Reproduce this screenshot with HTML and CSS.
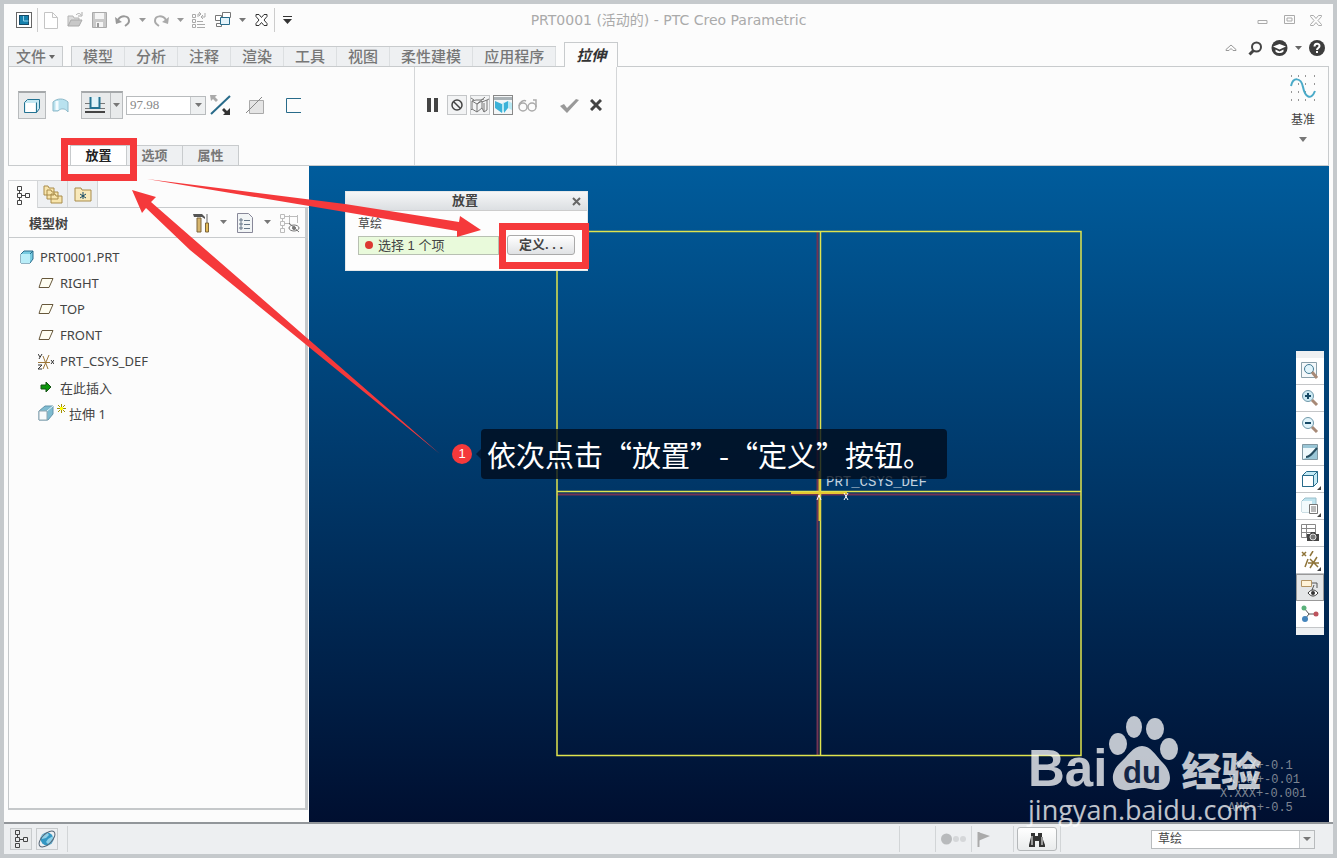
FILE: index.html
```html
<!DOCTYPE html>
<html lang="zh-CN">
<head>
    <meta charset="UTF-8">
    <meta name="viewport" content="width=device-width, initial-scale=1.0">
    <title>PRT0001 - PTC Creo Parametric</title>
    <link rel="stylesheet" href="styles.css">
</head>
<body>
<div class="app">

  <header class="titlebar">
    <div class="quick">
      <button class="ico" aria-label="Creo"><svg width="16" height="16"><rect x=".5" y=".5" width="15" height="15" fill="#fff" stroke="#666"/><rect x="3.500" y="3.500" width="9" height="9" fill="#1681ad" stroke="#164a66"/><path d="M7.500 4v5h5" fill="none" stroke="#8fd0e8"/></svg></button>
      <span class="sep"></span>
      <button class="ico" aria-label="新建"><svg width="14" height="17"><path d="M.5.5h8l5 5v11H.5zM8.500.5v5h5" fill="#fff" stroke="#c4c4c4"/></svg></button>
      <button class="ico" aria-label="打开"><svg width="17" height="16"><path d="M1 14V4h5l1 2h5v2" fill="#ddd" stroke="#b5b5b5"/><path d="M1 14l3-6h11l-3 6z" fill="#c8c8c8" stroke="#aaa"/><path d="M9 3c2-2 4-2 5 0m1-3v4h-4" fill="none" stroke="#aaa"/></svg></button>
      <button class="ico" aria-label="保存"><svg width="15" height="16"><path d="M.5.500h14v15H.5z" fill="#c9c9c9" stroke="#aaa"/><path d="M3 1h9v6H3zM4 10h7v5H4z" fill="#f5f5f5"/><path d="M5 11h2v4H5z" fill="#999"/></svg></button>
      <button class="ico" aria-label="撤消"><svg width="16" height="14"><path d="M3 7c3-5 11-5 11 1 0 2-1 3-4 5" fill="none" stroke="#999" stroke-width="2"/><path d="M0 4l1 7 6-2z" fill="#999"/></svg></button>
      <button class="ico drop" aria-label="更多"><svg width="7" height="5"><path d="M0 0h7L3.500 4z" fill="#999"/></svg></button>
      <button class="ico" aria-label="重做"><svg width="16" height="14"><path d="M13 7C10 2 2 2 2 8c0 2 1 3 4 5" fill="none" stroke="#aaa" stroke-width="2"/><path d="M16 4l-1 7-6-2z" fill="#aaa"/></svg></button>
      <button class="ico drop" aria-label="更多"><svg width="7" height="5"><path d="M0 0h7L3.500 4z" fill="#999"/></svg></button>
      <button class="ico" aria-label="重新生成"><svg width="16" height="16" fill="none" stroke="#aaa"><path d="M1.500 2.500h3v3h-3zM1.500 7.500h3v3h-3zM1.500 12.500h3v3h-3zM6 9.500h6M6 12.500h8M6 15.500h8M7 5V2h3m4-1v4h-4M8 0l2 2-2 2M12 3l-2 2 2 2"/></svg></button>
      <button class="ico" aria-label="窗口"><svg width="16" height="16" stroke="#777"><path d="M.5 3.500h6v5h-6zM1.500 11.500h5v3h-5zM7.500.5h8v5h-8z" fill="#fff"/><path d="M5.500 5.500h9v7h-9z" fill="#e4f3fa" stroke="#286b8a"/></svg></button>
      <button class="ico drop" aria-label="更多"><svg width="7" height="5"><path d="M0 0h7L3.500 4z" fill="#777"/></svg></button>
      <button class="ico" aria-label="关闭"><svg width="13" height="12"><path d="M1 .5h3l2.500 3 2.500-3h3v2L9 6l3 3.500v2H9l-2.500-3-2.500 3H1v-2L4 6 1 2.500z" fill="#fff" stroke="#333"/></svg></button>
      <span class="sep"></span>
      <button class="ico drop" aria-label="自定义"><svg width="9" height="8"><path d="M0 .5h9" stroke="#333"/><path d="M0 3h9L4.500 8z" fill="#333"/></svg></button>
    </div>
    <h1 class="window-title">PRT0001 (活动的) - PTC Creo Parametric</h1>
    <div class="window-buttons">
      <button class="ico" aria-label="最小化"><svg width="11" height="10"><path d="M1 5.500h9v3H1z" fill="none" stroke="#aaa"/></svg></button>
      <button class="ico" aria-label="最大化"><svg width="11" height="10"><path d="M.5.5h10v8H.5zM3 3h5v3H3z" fill="none" stroke="#aaa"/></svg></button>
      <button class="ico" aria-label="关闭窗口"><svg width="12" height="11"><path d="M.5.5h3L6 3.500l2.500-3h3v1L8 5.500l3.500 4v1h-3L6 7.500l-2.500 3h-3v-1L4 5.500l-3.500-4z" fill="none" stroke="#aaa"/></svg></button>
    </div>
  </header>

  <nav class="tabs">
    <button class="tab file">文件<svg width="6" height="4"><path d="M0 0h6L3 4z" fill="#666"/></svg></button>
    <div class="tab-group">
      <button class="tab">模型</button>
      <button class="tab">分析</button>
      <button class="tab">注释</button>
      <button class="tab">渲染</button>
      <button class="tab">工具</button>
      <button class="tab">视图</button>
      <button class="tab">柔性建模</button>
      <button class="tab">应用程序</button>
    </div>
    <button class="tab current">拉伸</button>
    <div class="help">
      <button class="ico" aria-label="最小化功能区"><svg width="12" height="8"><path d="M1 5.500L6 1l5 4.500v1H8L6 4.500l-2 2H1z" fill="none" stroke="#999"/></svg></button>
      <button class="ico" aria-label="搜索"><svg width="15" height="15"><circle cx="8.500" cy="6" r="4.500" fill="none" stroke="#444" stroke-width="2"/><path d="M5.500 9.500L1.500 13.500" stroke="#444" stroke-width="3"/></svg></button>
      <button class="ico" aria-label="学习"><svg width="17" height="16"><circle cx="8.500" cy="8" r="8" fill="#3d3d3d"/><path d="M2 6.500L8.500 4 15 6.500 8.500 9.500zM4.500 9.500v2c2 2 6 2 8 0v-2l-4 2z" fill="#fff"/></svg></button>
      <button class="ico drop" aria-label="更多"><svg width="7" height="5"><path d="M0 0h7L3.500 4z" fill="#666"/></svg></button>
      <button class="ico" aria-label="帮助"><svg width="16" height="16"><circle cx="8" cy="8" r="8" fill="#3d3d3d"/><path d="M5.500 6.500C5.500 3 10.500 3 10.500 6c0 2-2.500 2-2.500 4" fill="none" stroke="#fff" stroke-width="2"/><path d="M7 11h2v2H7z" fill="#fff"/></svg></button>
    </div>
  </nav>

  <section class="ribbon">
    <div class="ribbon-left">
      <div class="tools">
        <button class="tool pressed" aria-label="实体"><svg width="16" height="16"><path d="M.5 4.500l3-3h12v9l-3 4H.5z" fill="#c4e8f3" stroke="#247392"/><path d="M1.500 5h10v9h-10z" fill="#fff"/><path d="M12.500 4.500v10" stroke="#247392"/></svg></button>
        <button class="tool" aria-label="曲面"><svg width="17" height="15"><path d="M1 4c4-4 11-4 15 0v10c-3-4-7-4-10-1H1z" fill="#b9e2ef" stroke="#8db9c9"/><path d="M5 3v9" stroke="#f5fcff" stroke-width="3"/></svg></button>
        <button class="tool pressed depth" aria-label="深度"><svg width="20" height="17"><path d="M0 6.500h5M15 6.500h5M0 11.500h20" stroke="#777"/><path d="M0 15h20" stroke="#444" stroke-width="2"/><path d="M5.500 0v11h9V0" fill="#e1f3f9" stroke="#247392" stroke-width="2"/></svg><span class="split"><svg width="7" height="5"><path d="M0 0h7L3.500 4z" fill="#777"/></svg></span></button>
        <div class="combo value">
          <input type="text" value="97.98" aria-label="深度值">
          <button aria-label="选择深度值"><svg width="7" height="5"><path d="M0 0h7L3.500 4z" fill="#777"/></svg></button>
        </div>
        <button class="tool" aria-label="反向"><svg width="22" height="22"><path d="M1 20L20 2" stroke="#286b8a" stroke-width="2"/><path d="M0 1h7L5 3l3 3-2 2-3-3-2 2z" fill="#aaa"/><path d="M20 21h-7l2-2-3-3 2-2 3 3 3-3z" fill="#333"/></svg></button>
        <button class="tool wide" aria-label="移除材料"><svg width="19" height="19"><path d="M3.500 4.500h14v13h-14z" fill="#e5e5e5" stroke="#aaa"/><path d="M0 17L16 1" stroke="#888"/></svg></button>
        <button class="tool wide" aria-label="加厚草绘"><svg width="16" height="17"><path d="M16 1.500H1.500v14H16" fill="none" stroke="#286b8a"/></svg></button>
      </div>
      <div class="subtabs">
        <button class="subtab on">放置</button>
        <button class="subtab">选项</button>
        <button class="subtab">属性</button>
      </div>
    </div>
    <div class="ribbon-mid">
      <button class="ico" aria-label="暂停"><svg width="12" height="14"><path d="M1 0h4v14H1zM8 0h4v14H8z" fill="#444"/></svg></button>
      <button class="mini" aria-label="无预览"><svg width="14" height="14"><circle cx="7" cy="7" r="5" fill="none" stroke="#444" stroke-width="1.500"/><path d="M3.500 3.500l7 7" stroke="#444" stroke-width="1.500"/></svg></button>
      <button class="mini" aria-label="分离预览"><svg width="18" height="16" fill="none" stroke="#777"><path d="M1 4l4-1h5l3-1M1 4v8l5 3 5-4V4L6 7 1 4m5 3v8M11 5l5-2v10l-3 2-2-4M0 1l3 2M13 6v9M6 7l8-7M16 3l2-1M1 12l-1 1"/></svg></button>
      <button class="mini on" aria-label="附加预览"><svg width="18" height="16"><path d="M0 0h18v3H0z" fill="#aab2b6"/><path d="M1 4l7 3v9L1 11zM10 6l4-2v7l-4 5z" fill="#3cb2d8"/><path d="M8 7l2-2v9l-2 2zM14 4l4 2v7l-4-2z" fill="#b6e8f3"/></svg></button>
      <button class="ico glasses" aria-label="特征预览"><svg width="20" height="14" fill="none" stroke="#aaa" stroke-width="1.500"><circle cx="5" cy="9" r="4"/><circle cx="14" cy="9" r="4"/><path d="M1 8c1-5 5-6 7-5M18 9V2h-3"/></svg></button>
      <button class="ico ok" aria-label="确定"><svg width="20" height="15"><path d="M1 8l4-2 3 4 9-9 3 1L8 15z" fill="#999"/></svg></button>
      <button class="ico" aria-label="取消"><svg width="12" height="12"><path d="M1 1l10 10M11 1L1 11" stroke="#444" stroke-width="3"/></svg></button>
    </div>
    <button class="datum">
      <svg width="28" height="28"><path d="M2 1h1M9 1h1M16 1h1M25 1h1M2 9h1M9 9h1M16 9h1M25 9h1M2 17h1M9 17h1M16 17h1M25 17h1M2 25h1M9 25h1M16 25h1M25 25h1" stroke="#333"/><path d="M2 11C4 2 12 2 14 12s8 14 12 4" fill="none" stroke="#4aaac8" stroke-width="2"/></svg>
      <span>基准</span>
      <svg width="8" height="5"><path d="M0 0h8L4 5z" fill="#777"/></svg>
    </button>
  </section>

  <main class="work">
    <aside class="side">
      <div class="side-tabs">
        <button class="side-tab on" aria-label="模型树"><svg width="14" height="20" fill="none" stroke="#444"><path d="M1.500 1.500h4v4h-4zM1.500 8.500h4v4h-4zM1.500 15.500h4v4h-4zM9.500 8.500h4v4h-4zM3.500 5.500v3M3.500 12.500v3M5.500 10.500h4"/></svg></button>
        <button class="side-tab" aria-label="文件夹浏览器"><svg width="20" height="20" fill="#f8e5ac" stroke="#a98c4b"><path d="M1 11V2h4l1 2h5v7zM4 15V6h4l1 2h6v7zM8 19v-9h4l1 2h6v7z"/></svg></button>
        <button class="side-tab" aria-label="收藏夹"><svg width="18" height="17"><path d="M1 15V2h6l1 2h9v11z" fill="#f8e9bb" stroke="#a98c4b"/><path d="M9 6v7M6 8l6 4M12 8l-6 4" stroke="#164a66"/></svg></button>
      </div>
      <div class="side-head">
        <h2>模型树</h2>
        <button class="ico" aria-label="设置"><svg width="17" height="20"><path d="M0 1h9l3 3v2L9 4H1z" fill="#555"/><path d="M4 5h4v14H4z" fill="#d6b56d" stroke="#7c653a"/><path d="M14 1v9" stroke="#666"/><path d="M12.500 10h3v9h-3z" fill="#e5bd58" stroke="#7c653a"/></svg></button>
        <button class="ico drop" aria-label="更多"><svg width="7" height="5"><path d="M0 0h7L3.500 4z" fill="#777"/></svg></button>
        <button class="ico" aria-label="显示"><svg width="16" height="20"><path d="M.5.5h11l4 4v15H.5z" fill="#f2f5f6" stroke="#889"/><path d="M3 6h2v2H3zM3 10h2v2H3zM3 14h2v2H3zM7 7.500h6M7 11.500h6M7 15.500h6" fill="none" stroke="#678"/></svg></button>
        <button class="ico drop" aria-label="更多"><svg width="7" height="5"><path d="M0 0h7L3.500 4z" fill="#777"/></svg></button>
        <button class="ico" aria-label="隐藏"><svg width="21" height="20" fill="none" stroke="#bbb"><path d="M1.500 1.500h4v4h-4zM1.500 8.500h4v4h-4zM1.500 15.500h4v4h-4zM3.500 5.500v3M3.500 12.500v3M6 3.500h13M6 10.500h5M10.500 2v10M18.500 2v8"/><ellipse cx="15" cy="15" rx="5" ry="3" stroke="#777"/><circle cx="15" cy="15" r="1.500" fill="#777" stroke="#777"/><path d="M10 10l10 9" stroke="#777"/></svg></button>
      </div>
      <ul class="tree">
        <li class="root"><svg width="14" height="14"><path d="M1 4l3-3h9v8l-3 4H1z" fill="#77cbe1" stroke="#286b8a"/><path d="M1 4h9v9H1z" fill="#b9edf8"/><path d="M10 4l3-3" stroke="#286b8a"/></svg>PRT0001.PRT</li>
        <li><svg width="16" height="10"><path d="M4 .5h11l-4 9H1z" fill="#fffef2" stroke="#67583c"/></svg>RIGHT</li>
        <li><svg width="16" height="10"><path d="M4 .5h11l-4 9H1z" fill="#fffef2" stroke="#67583c"/></svg>TOP</li>
        <li><svg width="16" height="10"><path d="M4 .5h11l-4 9H1z" fill="#fffef2" stroke="#67583c"/></svg>FRONT</li>
        <li><svg width="16" height="17"><path d="M0 9.500h12M5 3l5 13M11 2L5 16" stroke="#9c7639" fill="none"/><path d="M0 1l2 3m2-3L1 6M0 12h4l-4 4h4M13 7l3 4m0-4l-3 4" fill="none" stroke="#333"/></svg>PRT_CSYS_DEF</li>
        <li><svg width="16" height="12"><path d="M3 4h5V1l5 5-5 5V8H3z" fill="#0c960c" stroke="#145214"/></svg>在此插入</li>
        <li class="feature"><svg width="16" height="16"><path d="M1 6l6-5h8v8l-5 6H1z" fill="#7ebbd0" stroke="#6394aa"/><path d="M1 6h8v9H1z" fill="#f8fbfc" stroke="#8fa6b1"/><path d="M9 6l6-5" stroke="#dff5fb"/></svg><svg class="spark" width="9" height="9"><path d="M4.500 0v9M0 4.500h9M1 1l7 7M8 1L1 8" stroke="#a39200"/><path d="M3 3h3v3H3z" fill="#ff0"/></svg>拉伸 1</li>
      </ul>
    </aside>

    <section class="canvas">
      <svg class="drawing" width="1020" height="656">
        <g fill="none">
          <path d="M508.500 66v523M248 328.500h524" stroke="#713453" stroke-width="2"/>
          <path d="M248 65.500h524v524H248zM511.500 66v523M248 325.500h524" stroke="#dfe34e" stroke-width="1.500"/>
          <path d="M482 327h56M510.500 305v50" stroke="#e6c832" stroke-width="2"/>
          <path d="M508 334l2-5 2 5M535 327l4 7M539 327l-4 7" stroke="#fff"/>
        </g>
        <text class="cad" x="517" y="320">PRT_CSYS_DEF</text>
        <g class="cad tolerance">
          <text x="926" y="603">X.X+-0.1</text>
          <text x="919" y="617">X.XX+-0.01</text>
          <text x="911" y="631">X.XXX+-0.001</text>
          <text x="919" y="645">ANG.+-0.5</text>
        </g>
      </svg>

      <div class="dialog" role="dialog" aria-label="放置">
        <div class="dialog-title"><strong>放置</strong><button aria-label="关闭对话框"><svg width="9" height="9"><path d="M1 1l7 7M8 1L1 8" stroke="#666" stroke-width="2"/></svg></button></div>
        <div class="dialog-body">
          <label for="sketch">草绘</label>
          <div class="dialog-row">
            <div class="collector"><i></i><input id="sketch" type="text" value="选择 1 个项" readonly></div>
            <button class="define">定义. . .</button>
          </div>
        </div>
      </div>

      <div class="view-tools">
        <button aria-label="重新调整"><svg width="18" height="18"><path d="M.5.500h15v15H.5z" fill="#f4f8fa" stroke="#8ba0aa"/><circle cx="8" cy="7" r="4.500" fill="#e1f4fb" stroke="#427a94"/><path d="M11 10l5 6" stroke="#a78976" stroke-width="3"/></svg></button>
        <button aria-label="放大"><svg width="17" height="17"><circle cx="6" cy="6" r="5.500" fill="#cdeaf4" stroke="#6f98a9"/><path d="M3 6h6M6 3v6" stroke="#164a66" stroke-width="2"/><path d="M10 10l5 5" stroke="#a78976" stroke-width="3"/></svg></button>
        <button aria-label="缩小"><svg width="17" height="17"><circle cx="6" cy="6" r="5.500" fill="#e1f4fb" stroke="#6f98a9"/><path d="M3 6h6" stroke="#164a66" stroke-width="2"/><path d="M10 10l5 5" stroke="#a78976" stroke-width="3"/></svg></button>
        <button aria-label="重画"><svg width="16" height="16"><path d="M.5.500h15v15H.5z" fill="#9ac6d6" stroke="#8198a2"/><path d="M1 4h14L4 14l-3 1z" fill="#eef8fb"/><path d="M4 13c3 0 5-2 11-9" fill="none" stroke="#264d5f" stroke-width="2"/></svg></button>
        <button class="more" aria-label="显示样式"><svg width="18" height="18"><path d="M1.500 5.500l4-4h11v11l-4 4h-11z" fill="#c4eaf5" stroke="#286b8a"/><path d="M1.500 5.500h11v11h-11z" fill="#fff" stroke="#286b8a"/><path d="M12.500 5.500l4-4" stroke="#286b8a"/></svg></button>
        <button class="more" aria-label="已命名视图"><svg width="18" height="18"><path d="M1 4l3-3h11v10l-3 4H1z" fill="#bfe4ef" stroke="#9abeca"/><path d="M1 4h10v11H1z" fill="#f2fafc"/><path d="M8.500 7.500h8v9h-8zM10 10h5M10 12h5M10 14h5" fill="#fff" stroke="#777"/></svg></button>
        <button aria-label="视图管理器"><svg width="18" height="18"><path d="M.5.500h14v13H.5zM.5 4.500h14M.5 8.500h14M5.500.5v13" fill="#fff" stroke="#888"/><path d="M6 10h3l1-2h4l1 2h3v7H6z" fill="#444"/><circle cx="12" cy="13" r="3" fill="#777" stroke="#ddd"/></svg></button>
        <button class="more" aria-label="基准显示"><svg width="18" height="18" fill="none" stroke="#8e7439"><path d="M1 1l4 4M5 1L1 5M12 0L9 5M7 8l-3 8M9 8l8 8M16 6L9 17M7 12h11" stroke-width="1.500"/></svg></button>
        <button class="on" aria-label="注释显示"><svg width="18" height="18"><path d="M.5 1.500h10v6H.5z" fill="#fff3d8" stroke="#b29464"/><path d="M11 4h5v5m-3-3l-2 5" fill="none" stroke="#555"/><path d="M7 14c3-4 7-4 10 0-3 4-7 4-10 0z" fill="#fff" stroke="#333"/><circle cx="12" cy="14" r="2" fill="#333"/></svg></button>
        <button aria-label="旋转中心"><svg width="18" height="18"><path d="M3 3l5 6-4 5M8 9h6" fill="none" stroke="#555"/><circle cx="3" cy="3" r="2.500" fill="#5ab17a"/><circle cx="4" cy="14" r="3" fill="#4585bc"/><circle cx="15" cy="9" r="2.500" fill="#bd535c"/></svg></button>
      </div>
    </section>
  </main>

  <footer class="status">
    <button class="stat pressed" aria-label="导航器"><svg width="14" height="18" fill="none" stroke="#444"><path d="M1.500.500h4v4h-4zM1.500 7.500h4v4h-4zM1.500 13.500h4v4h-4zM9.500 7.500h4v4h-4zM3.500 4.500v3M5.500 9.500h4"/></svg></button>
    <button class="stat" aria-label="浏览器"><svg width="18" height="18"><circle cx="9" cy="9" r="6.500" fill="#3497c3"/><path d="M3 6l6-4 2 3-3 3-4 1zM10 9l5-3v5l-4 4-3-3z" fill="#8fd0e8"/><ellipse cx="9" cy="9" rx="10" ry="5" transform="rotate(-45 9 9)" fill="none" stroke="#567"/></svg></button>
    <span class="bar"></span>
    <span class="push"></span>
    <span class="bar"></span>
    <span class="cell"></span>
    <span class="bar"></span>
    <span class="cell"><svg width="26" height="12"><circle cx="5.500" cy="6" r="5.500" fill="#b8babc"/><circle cx="15" cy="6" r="3" fill="#d5d7d9"/><circle cx="22" cy="6" r="3" fill="#d5d7d9"/></svg></span>
    <span class="bar"></span>
    <span class="cell flag"><svg width="14" height="16"><path d="M1.500 1v15" stroke="#aaa" stroke-width="2"/><path d="M1 1l12 4-12 5z" fill="#aaa"/></svg></span>
    <span class="bar"></span>
    <button class="find" aria-label="搜索工具"><svg width="18" height="17"><path d="M3 2h4v3h3V2h4v4l3 8v2h-6v-6H7v6H1v-2l2-8z" fill="#333"/><path d="M4 5v9M14 6v8" stroke="#999" stroke-width="2"/></svg></button>
    <span class="bar"></span>
    <div class="combo filter">
      <select aria-label="选择过滤器"><option>草绘</option></select>
      <span class="arrow"><svg width="8" height="5"><path d="M0 0h8L4 4z" fill="#777"/></svg></span>
    </div>
  </footer>

  <div class="watermark">
    <div class="brand">
      <span class="bai">Bai</span>
      <svg width="70" height="76"><g fill="#fff"><ellipse cx="9" cy="28" rx="9" ry="11"/><ellipse cx="25" cy="11" rx="8" ry="11"/><ellipse cx="46" cy="13" rx="9" ry="11"/><ellipse cx="60" cy="33" rx="9" ry="11"/><path d="M33 30c9 0 13 9 20 16 13 12 9 28-4 28-7 0-9-2-16-2s-11 3-18 2C2 73 0 57 11 47c8-7 13-17 22-17z"/></g><text class="du" x="33" y="67">du</text></svg>
      <span class="jing">经验</span>
    </div>
    <div class="url">jingyan.baidu.com</div>
  </div>

  <!-- step marks drawn over the window -->
  <svg class="marks" width="600" height="470">
    <g fill="none" stroke="#f5393b" stroke-width="7"><rect x="64.500" y="141.500" width="69" height="36"/><rect x="502.500" y="226.500" width="83" height="39"/></g>
    <path d="M147 179L345 204 459 222 460 216 481 230 457 237 457 231 345 212zM132 190L156 197 151 202 206 250 440 454 190 250 146 208 142 213z" fill="#f5393b"/>
    <path d="M476 454l5-5v10z" fill="#021a38"/>
  </svg>
  <div class="step">
    <span class="number">1</span>
    <p class="caption">依次点击“放置”-“定义”按钮。</p>
  </div>
</div>
</body>
</html>
```
FILE: styles.css
```css
*{
    box-sizing: border-box;
}

body{
    margin: 0;
    font-family: "Liberation Sans", "Noto Sans CJK SC", sans-serif;
    font-size: 12px;
    color: #444;
}

button, input, select{
    font: inherit;
    color: inherit;
    margin: 0;
    padding: 0;
    border: none;
    background: none;
}

svg{
    display: block;
    flex: none;
}

.app{
    position: relative;
    display: flex;
    flex-direction: column;
    min-height: 100vh;
    overflow: hidden;
    border: 4px solid #c5c9cc;
    background: #fcfcfc;
}

.ico{
    display: flex;
    align-items: center;
    justify-content: center;
    width: 24px;
    height: 24px;
}

.drop{
    width: 14px;
}

/* title bar */
.titlebar{
    display: grid;
    grid-template-columns: 1fr auto 1fr;
    align-items: center;
    height: 32px;
}

.quick{
    display: flex;
    align-items: center;
    padding-left: 8px;
}

.quick .ico:last-child{
    width: 22px;
}

.sep{
    width: 1px;
    height: 24px;
    margin: 0 1px;
    background: #ccc;
}

.window-title{
    margin: 0;
    font-family: "DejaVu Sans", "Noto Sans CJK SC", sans-serif;
    font-size: 14px;
    font-weight: normal;
    line-height: 18px;
    color: #aaa;
}

.window-buttons{
    display: flex;
    justify-content: flex-end;
    gap: 3px;
    padding-right: 5px;
}

/* ribbon tabs */
.tabs{
    display: flex;
    align-items: flex-end;
    height: 30px;
    padding: 0 4px;
}

.tab{
    height: 20px;
    padding: 0 11px;
    border-right: 1px solid #dcdfe1;
    font-size: 15px;
    line-height: 16px;
    font-weight: 500;
    color: #777;
}

.tab-group{
    display: flex;
    margin: 0 8px;
    border: 1px solid #c8cbcd;
    border-width: 1px 0 0 1px;
    background: #eef0f2;
}

.tab-group .tab{
    height: 19px;
}

.file{
    display: flex;
    align-items: center;
    gap: 3px;
    padding: 0 7px;
    border: 1px solid #c8cbcd;
    border-bottom: none;
    background: #eef0f2;
}

.tab.current{
    height: 25px;
    margin-bottom: -1px;
    border: 1px solid #c8cbcd;
    border-bottom: none;
    background: #fcfcfc;
    line-height: 23px;
    font-style: italic;
    font-weight: bold;
    color: #333;
    z-index: 1;
}

.help{
    display: flex;
    align-items: center;
    margin-left: auto;
    padding-bottom: 6px;
}

/* ribbon */
.ribbon{
    display: flex;
    height: 100px;
    margin: 0 4px;
    border: 1px solid #c8cbcd;
}

.ribbon-left{
    display: flex;
    flex-direction: column;
    justify-content: space-between;
    width: 406px;
    padding-top: 24px;
    border-right: 1px solid #d4d6d8;
}

.tools{
    display: flex;
    align-items: center;
    padding-left: 9px;
}

.tool{
    display: flex;
    align-items: center;
    justify-content: center;
    width: 28px;
    height: 28px;
}

.pressed{
    border: 1px solid #b8bbbd;
    border-top: 2px solid #a5a8aa;
    background: #e8eaeb;
}

.depth{
    justify-content: space-between;
    width: 42px;
    margin-left: 7px;
    padding-left: 3px;
}

.split{
    display: flex;
    align-items: center;
    height: 100%;
    padding: 0 2px;
    border-left: 1px solid #b8bbbd;
}

.combo{
    position: relative;
    display: flex;
    height: 19px;
    border: 1px solid #b8bbbd;
    background: #fff;
}

.combo button, .arrow{
    display: flex;
    align-items: center;
    justify-content: center;
    width: 15px;
    border-left: 1px solid #c8cbcd;
    background: #eef0f1;
}

.value{
    width: 80px;
    margin: 0 1px 0 3px;
}

.value input{
    flex: 1;
    min-width: 0;
    padding-left: 3px;
    font-family: "Liberation Serif", serif;
    font-size: 13px;
    color: #888;
}

.wide{
    width: 36px;
    margin-left: 2px;
}

.subtabs{
    display: flex;
    padding-left: 61px;
}

.subtab{
    width: 56px;
    height: 20px;
    border: 1px solid #c8cbcd;
    border-width: 1px 1px 0 0;
    background: #eef0f2;
    font-size: 13px;
    font-weight: bold;
    line-height: 18px;
    color: #777;
}

.subtab.on{
    width: 57px;
    border-left-width: 1px;
    background: #fff;
    color: #222;
}

.ribbon-mid{
    display: flex;
    align-items: center;
    align-self: stretch;
    gap: 3px;
    width: 202px;
    padding: 0 0 22px 5px;
    border-right: 1px solid #d4d6d8;
}

.mini{
    display: flex;
    align-items: center;
    justify-content: center;
    width: 20px;
    height: 20px;
    border: 1px solid #c4c6c8;
    background: #f2f3f4;
}

.mini.on{
    border-color: #888;
    background: #f4f6f7;
}

.ok{
    margin-left: 14px;
}

.datum{
    display: flex;
    flex-direction: column;
    align-items: center;
    gap: 8px;
    margin-left: auto;
    padding: 8px 11px;
    line-height: 18px;
}

/* model tree */
.work{
    flex: 1;
    display: flex;
    min-height: 656px;
    padding-left: 4px;
}

.side{
    width: 301px;
    display: flex;
    flex-direction: column;
    padding: 14px 0 12px;
}

.side-tabs{
    display: flex;
    border-bottom: 1px solid #c8cbcd;
}

.side-tab{
    display: flex;
    align-items: center;
    justify-content: center;
    width: 30px;
    height: 27px;
    border: 1px solid #d4d6d8;
    border-width: 1px 1px 0 0;
    background: #eef0f2;
}

.side-tab.on{
    height: 28px;
    border-left-width: 1px;
    margin-bottom: -1px;
    background: #fcfcfc;
}

.side-head{
    display: flex;
    align-items: center;
    gap: 2px;
    width: 300px;
    height: 30px;
    padding: 0 4px 0 20px;
    border: 1px solid #c8cbcd;
    border-width: 0 3px 1px 1px;
}

.side-head h2{
    margin: 0 auto 0 0;
    font-size: 13px;
    font-weight: bold;
}

.side-head .drop{
    width: 16px;
}

.tree{
    flex: 1;
    width: 300px;
    margin: 0;
    padding: 6px 0 0 11px;
    border: 1px solid #c5c8ca;
    border-width: 0 3px 2px 1px;
    list-style: none;
    font-family: "Noto Sans", "Noto Sans CJK SC", sans-serif;
    font-size: 13px;
}

.tree li{
    display: flex;
    align-items: center;
    gap: 6px;
    height: 26px;
    padding-left: 18px;
}

.tree li.root{
    padding-left: 0;
}

.tree li.feature{
    gap: 3px;
}

.spark{
    margin-bottom: 9px;
}

/* graphics area */
.canvas{
    position: relative;
    flex: 1;
    margin-right: 4px;
    overflow: hidden;
    background: linear-gradient(#005c9c, #000f30);
}

.drawing{
    position: absolute;
    top: 0;
    left: 0;
}

.cad{
    font-family: "Liberation Mono", monospace;
    font-size: 14px;
    fill: #c3d2de;
}

.tolerance{
    font-size: 12px;
    fill: #7d8592;
}

.dialog{
    position: absolute;
    top: 25px;
    left: 36px;
    width: 243px;
    border: 1px solid #e5e8ea;
    background: #fdfdfd;
}

.dialog-title{
    display: flex;
    align-items: center;
    height: 19px;
    padding: 0 6px;
    border-bottom: 1px solid #ccc;
    background: linear-gradient(#f5f6f7, #dcdfe2);
    font-size: 13px;
    line-height: 18px;
}

.dialog-title strong{
    flex: 1;
    padding-left: 6px;
    text-align: center;
}

.dialog-body{
    padding: 4px 12px 15px;
}

.dialog-body label{
    display: block;
    line-height: 18px;
}

.dialog-row{
    display: flex;
    align-items: center;
    gap: 8px;
    margin-top: 2px;
}

.collector{
    flex: 1;
    display: flex;
    align-items: center;
    gap: 5px;
    height: 19px;
    padding-left: 6px;
    border: 1px solid #b8c0b2;
    background: #e9fadb;
}

.collector i{
    width: 8px;
    height: 8px;
    border-radius: 50%;
    background: #dc3932;
}

.collector input{
    width: 100px;
    font-size: 13px;
    line-height: 17px;
}

.define{
    width: 68px;
    height: 20px;
    border: 1px solid #aaa;
    border-radius: 3px;
    background: linear-gradient(#fff, #e0e2e4);
    font-size: 13px;
    line-height: 16px;
    font-weight: bold;
}

.view-tools{
    position: absolute;
    top: 185px;
    right: 5px;
    width: 28px;
    padding: 7px 0;
    background: #eef0f2;
}

.view-tools button{
    position: relative;
    display: flex;
    align-items: center;
    justify-content: center;
    width: 28px;
    height: 27px;
    border-bottom: 1px solid #c4c6c8;
    background: #fff;
}

.view-tools .on{
    border: 1px solid #999;
    background: #e4e6e7;
}

.more::after{
    content: "";
    position: absolute;
    right: 3px;
    bottom: 2px;
    border: 2px solid #444;
    border-color: transparent #444 #444 transparent;
}

/* status bar */
.status{
    display: flex;
    align-items: center;
    height: 32px;
    padding: 0 18px 0 6px;
    border-top: 2px solid #92969a;
    background: #edeff1;
}

.stat{
    display: flex;
    align-items: center;
    justify-content: center;
    width: 22px;
    height: 22px;
    margin-right: 4px;
    border: 1px solid #c8cbcd;
}

.stat + .bar{
    margin-left: 5px;
}

.bar{
    width: 1px;
    height: 26px;
    background: #d2d5d7;
}

.cell{
    display: flex;
    align-items: center;
    justify-content: center;
    width: 35px;
}

.flag{
    justify-content: flex-start;
    width: 41px;
    padding-left: 5px;
}

.push{
    flex: 1;
}

.find{
    display: flex;
    align-items: center;
    justify-content: center;
    width: 40px;
    height: 24px;
    margin: 0 3px;
    border: 1px solid #b5b8ba;
    border-radius: 3px;
    background: linear-gradient(#fff, #e9ebec);
}

.filter{
    width: 164px;
    margin-left: 90px;
}

.filter select{
    flex: 1;
    padding-left: 6px;
    appearance: none;
}

.filter .arrow{
    position: absolute;
    top: 0;
    right: 0;
    height: 17px;
    pointer-events: none;
}

/* overlays */
.marks{
    position: absolute;
    top: -4px;
    left: -4px;
    pointer-events: none;
}

.step{
    position: absolute;
    top: 425px;
    left: 448px;
    display: flex;
    align-items: center;
    gap: 9px;
}

.number{
    width: 20px;
    height: 20px;
    border-radius: 50%;
    background: #f5393b;
    color: #fff;
    font-size: 13px;
    line-height: 20px;
    text-align: center;
}

.caption{
    margin: 0;
    padding: 0 15px 0 6px;
    border-radius: 4px;
    background: rgba(0, 10, 25, 0.78);
    color: #fff;
    font-family: "Noto Sans CJK SC", sans-serif;
    font-size: 29px;
    line-height: 50px;
    white-space: nowrap;
}

.watermark{
    position: absolute;
    right: 68px;
    bottom: 26px;
    width: 237px;
    color: #fff;
    opacity: 0.75;
    pointer-events: none;
}

.brand{
    display: flex;
    align-items: flex-end;
    gap: 2px;
    height: 76px;
    line-height: 46px;
}

.bai{
    font-size: 51px;
    font-weight: bold;
}

.du{
    font-size: 31px;
    font-weight: bold;
    text-anchor: middle;
    fill: #1d2c4c;
}

.jing{
    font-family: "Noto Sans CJK SC", sans-serif;
    font-size: 40px;
    font-weight: 900;
}

.url{
    font-family: "Open Sans", sans-serif;
    font-size: 27px;
    font-weight: 500;
    line-height: 36px;
}
```
